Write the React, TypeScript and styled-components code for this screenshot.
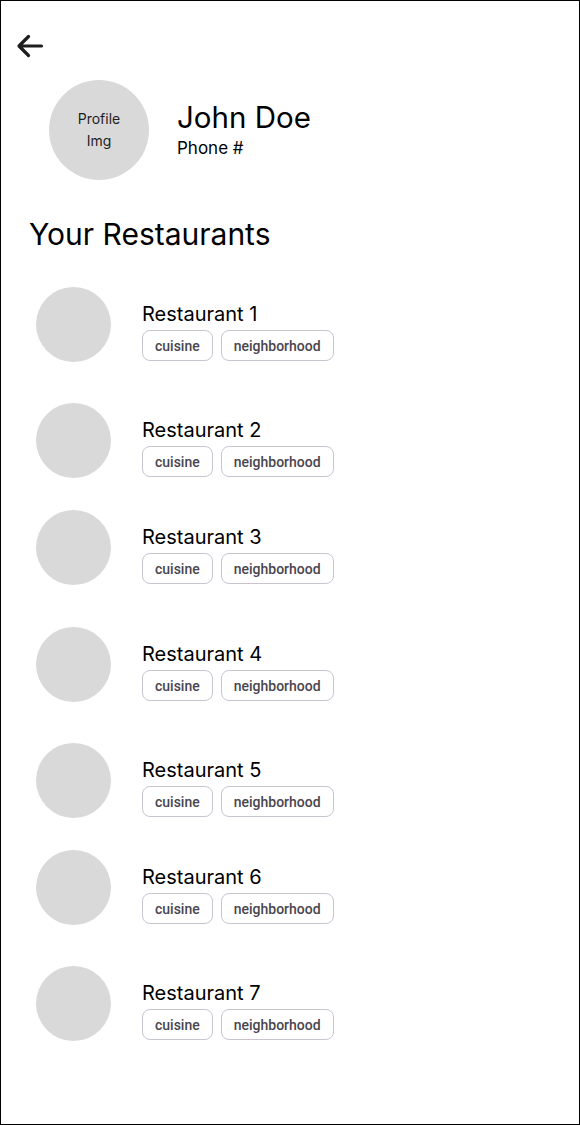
import styled, { createGlobalStyle } from 'styled-components'

const GlobalStyle = createGlobalStyle`
  * {
    box-sizing: border-box;
  }
  body {
    margin: 0;
    background: #ffffff;
    font-family: Inter, 'Noto Sans', sans-serif;
    color: #000000;
  }
`

const Frame = styled.div`
  width: 580px;
  height: 1125px;
  border: 1px solid #000000;
  background: #ffffff;
  overflow: hidden;
`

const BackButton = styled.button`
  display: block;
  margin: 33px 0 0 15px;
  padding: 0;
  width: 28px;
  height: 24px;
  border: none;
  background: none;
  cursor: pointer;

  svg {
    display: block;
    overflow: visible;
  }
`

const ProfileRow = styled.div`
  display: flex;
  align-items: center;
  gap: 28px;
  margin-top: 22px;
  padding-left: 48px;
`

const Avatar = styled.div<{ size: number }>`
  width: ${({ size }) => size}px;
  height: ${({ size }) => size}px;
  flex-shrink: 0;
  border-radius: 50%;
  background: #d9d9d9;
  display: flex;
  align-items: center;
  justify-content: center;
  text-align: center;
  font-size: 14px;
  line-height: 22px;
  color: #1e1e1e;
`

const ProfileInfo = styled.div`
  display: flex;
  flex-direction: column;
  margin-top: -3px;
`

const Name = styled.div`
  font-size: 29.5px;
  line-height: 36px;
`

const Phone = styled.div`
  font-size: 17px;
  line-height: 21px;
  margin-top: 3px;
`

const SectionTitle = styled.h2`
  margin: 35px 0 0 28px;
  font-size: 30px;
  font-weight: 400;
  line-height: 39px;
`

const List = styled.div`
  display: flex;
  flex-direction: column;
  padding: 0 0 0 35px;
`

const Row = styled.div<{ offset: number }>`
  display: flex;
  align-items: flex-start;
  gap: 31px;
  margin-top: ${({ offset }) => offset}px;
`

const RowInfo = styled.div`
  display: flex;
  flex-direction: column;
  padding-top: 15px;
`

const RestaurantName = styled.div`
  font-size: 20px;
  line-height: 24px;
`

const Chips = styled.div`
  display: flex;
  gap: 8px;
  margin-top: 4px;
`

const Chip = styled.span`
  display: inline-flex;
  align-items: center;
  height: 31px;
  padding: 0 12px;
  border: 1px solid #cac4d0;
  border-radius: 8px;
  font-family: Roboto, 'Liberation Sans', sans-serif;
  font-weight: 500;
  font-size: 14px;
  color: #49454f;
`

const restaurants = [
  { name: 'Restaurant 1', offset: 33 },
  { name: 'Restaurant 2', offset: 41 },
  { name: 'Restaurant 3', offset: 32 },
  { name: 'Restaurant 4', offset: 42 },
  { name: 'Restaurant 5', offset: 41 },
  { name: 'Restaurant 6', offset: 32 },
  { name: 'Restaurant 7', offset: 41 },
]

export default function App() {
  return (
    <>
      <GlobalStyle />
      <Frame>
        <BackButton aria-label="Back">
          <svg width="28" height="24" viewBox="0 0 28 24" fill="none">
            <path
              d="M25.5 12H3.5M12.5 2.5L3 12l9.5 9.5"
              stroke="#1e1e1e"
              strokeWidth="3.2"
              strokeLinecap="round"
              strokeLinejoin="round"
            />
          </svg>
        </BackButton>

        <ProfileRow>
          <Avatar size={100}>
            Profile
            <br />
            Img
          </Avatar>
          <ProfileInfo>
            <Name>John Doe</Name>
            <Phone>Phone #</Phone>
          </ProfileInfo>
        </ProfileRow>

        <SectionTitle>Your Restaurants</SectionTitle>

        <List>
          {restaurants.map((r) => (
            <Row key={r.name} offset={r.offset}>
              <Avatar size={75} />
              <RowInfo>
                <RestaurantName>{r.name}</RestaurantName>
                <Chips>
                  <Chip>cuisine</Chip>
                  <Chip>neighborhood</Chip>
                </Chips>
              </RowInfo>
            </Row>
          ))}
        </List>
      </Frame>
    </>
  )
}
